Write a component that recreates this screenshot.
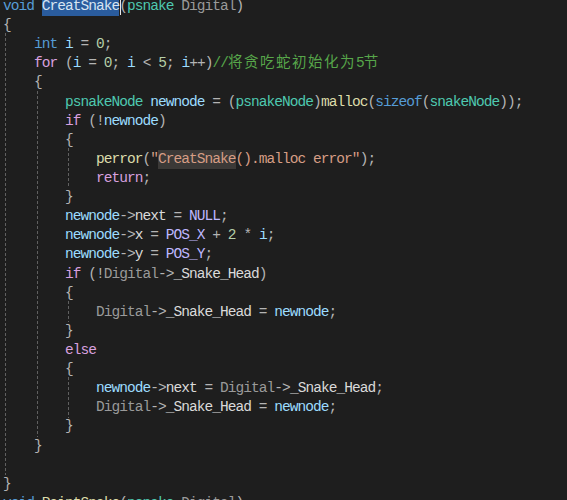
import React from "react";

// token colour classes (VS dark theme)
const kw = "text-[#569cd6]";
const ctl = "text-[#d8a0df]";
const ty = "text-[#4ec9b0]";
const pa = "text-[#9a9a9a]";
const v = "text-[#9cdcfe]";
const n = "text-[#b5cea8]";
const op = "text-[#b4b4b4]";
const p = "text-[#b4b4b4]";
const mac = "text-[#beb7ff]";
const fn = "text-[#dcdcaa]";
const str = "text-[#d69d85]";
const strHl = "text-[#d69d85] bg-[#3b3937]";
const m = "text-[#dadada]";
const sel = "text-[#d6e4f2] bg-[#2a5c9e]";
const cm = "text-[#57a64a]";
const cjk = "text-[#57a64a] tracking-[1.5px]";

const LINE = 19.12;
const TOP = -3;

const lines = [
  [0, [[kw, "void"], [p, " "], [sel, "CreatSnake"], [p, "("], [ty, "psnake"], [p, " "], [pa, "Digital"], [p, ")"]]],
  [0, [[p, "{"]]],
  [4, [[kw, "int"], [p, " "], [v, "i"], [op, " = "], [n, "0"], [p, ";"]]],
  [4, [[ctl, "for"], [p, " ("], [v, "i"], [op, " = "], [n, "0"], [p, "; "], [v, "i"], [op, " < "], [n, "5"], [p, "; "], [v, "i"], [op, "++"], [p, ")"], [cm, "//"], [cjk, "将贪吃蛇初始化为"], [cm, "5"], [cjk, "节"]]],
  [4, [[p, "{"]]],
  [8, [[ty, "psnakeNode"], [p, " "], [v, "newnode"], [op, " = "], [p, "("], [ty, "psnakeNode"], [p, ")"], [fn, "malloc"], [p, "("], [kw, "sizeof"], [p, "("], [ty, "snakeNode"], [p, "));"]]],
  [8, [[ctl, "if"], [p, " ("], [op, "!"], [v, "newnode"], [p, ")"]]],
  [8, [[p, "{"]]],
  [12, [[fn, "perror"], [p, "("], [str, "\""], [strHl, "CreatSnake"], [str, "().malloc error\""], [p, ");"]]],
  [12, [[ctl, "return"], [p, ";"]]],
  [8, [[p, "}"]]],
  [8, [[v, "newnode"], [op, "->"], [m, "next"], [op, " = "], [mac, "NULL"], [p, ";"]]],
  [8, [[v, "newnode"], [op, "->"], [m, "x"], [op, " = "], [mac, "POS_X"], [op, " + "], [n, "2"], [op, " * "], [v, "i"], [p, ";"]]],
  [8, [[v, "newnode"], [op, "->"], [m, "y"], [op, " = "], [mac, "POS_Y"], [p, ";"]]],
  [8, [[ctl, "if"], [p, " ("], [op, "!"], [pa, "Digital"], [op, "->"], [m, "_Snake_Head"], [p, ")"]]],
  [8, [[p, "{"]]],
  [12, [[pa, "Digital"], [op, "->"], [m, "_Snake_Head"], [op, " = "], [v, "newnode"], [p, ";"]]],
  [8, [[p, "}"]]],
  [8, [[ctl, "else"]]],
  [8, [[p, "{"]]],
  [12, [[v, "newnode"], [op, "->"], [m, "next"], [op, " = "], [pa, "Digital"], [op, "->"], [m, "_Snake_Head"], [p, ";"]]],
  [12, [[pa, "Digital"], [op, "->"], [m, "_Snake_Head"], [op, " = "], [v, "newnode"], [p, ";"]]],
  [8, [[p, "}"]]],
  [4, [[p, "}"]]],
  [0, []],
  [0, [[p, "}"]]],
  [0, [[kw, "void"], [p, " "], [fn, "PaintSnake"], [p, "("], [ty, "psnake"], [p, " "], [pa, "Digital"], [p, ")"]]],
];

// indent guides: [x, first line, last line]
const guides = [
  [5, 2, 24],
  [37, 5, 22],
  [68, 8, 9],
  [68, 16, 16],
  [68, 20, 21],
];

const App = () => {
  return (
    <div className="relative w-[567px] h-[500px] overflow-hidden bg-[#1e1e1e]">
      <div className="mt-[-3px] pl-[3px] font-['Liberation_Mono','Noto_Sans_CJK_SC',monospace] text-[14.5px] tracking-[-0.95px] leading-[19.12px] whitespace-pre">
        {lines.map(([indent, toks], i) => (
          <div key={i} className="h-[19.12px]">
            {" ".repeat(indent)}
            {toks.map(([cls, t], j) => (
              <span
                key={j}
                className={
                  cls === sel || cls === strHl
                    ? `${cls} inline-block h-[19.12px]`
                    : cls
                }
              >
                {t}
              </span>
            ))}
          </div>
        ))}
      </div>

      {guides.map(([x, a, b], i) => (
        <div
          key={i}
          className="absolute w-px bg-[repeating-linear-gradient(to_bottom,#606060_0_3px,transparent_3px_5px)]"
          style={{ left: x, top: TOP + a * LINE - 2, height: (b - a + 1) * LINE + 2 }}
        />
      ))}

      {/* caret */}
      <div className="absolute left-[120px] top-0 w-px h-[15px] bg-[#e8e8e8]" />
    </div>
  );
};

export default App;
